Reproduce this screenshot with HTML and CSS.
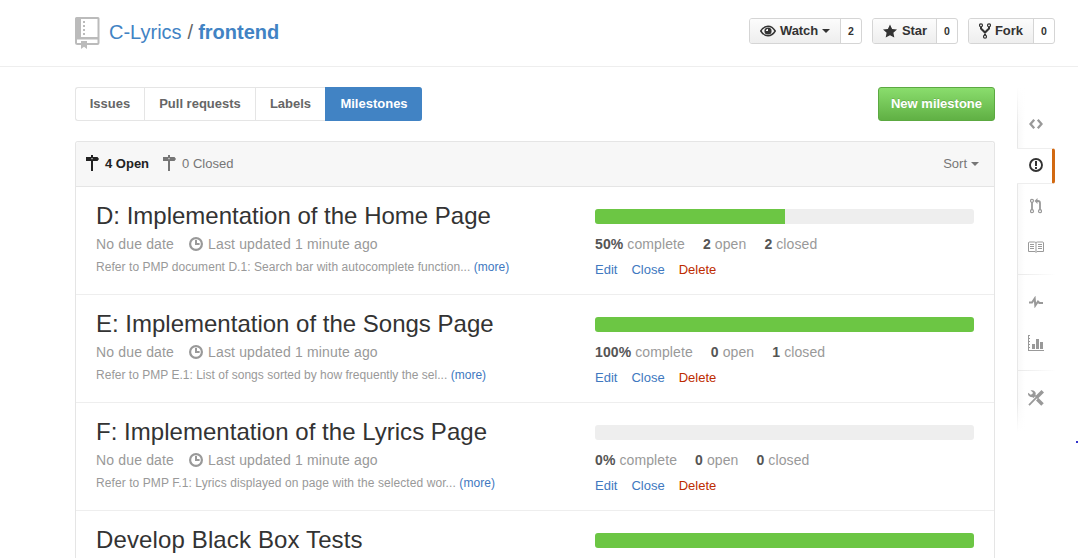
FILE: index.html
```html
<!DOCTYPE html>
<html lang="en">
<head>
<meta charset="utf-8">
<title>Milestones - C-Lyrics/frontend</title>
<link rel="stylesheet" href="styles.css">
</head>
<body>
<svg class="defs" width="0" height="0">
  <symbol id="clock" viewBox="0 0 14 14"><circle cx="7" cy="7" r="5.900" fill="none" stroke="currentColor" stroke-width="2.200"/><path d="M7 3v4h3.600" fill="none" stroke="currentColor" stroke-width="2"/></symbol>
  <symbol id="sign" viewBox="0 0 13 16"><path fill-rule="evenodd" d="M5 0h2v2h4.500L13 4l-1.500 2H7v10H5V6H0V2h5zM5.500 3v1.200h1V3z" fill="currentColor"/></symbol>
</svg>
<header class="pagehead">
  <h1 class="repo">
    <svg class="repo-icon" width="25" height="33" viewBox="0 0 25 33"><path fill="#bbb" fill-rule="evenodd" d="M1.500 0h21.500q1.500 0 1.500 1.500v24.500q0 2-2 2H12v4l-3-2.300L6 32v-4H2.500q-2.500 0-2.500-2.500V1.500Q0 0 1.500 0zM6 2v18h16.500V2zM2 22.500v3.500h4v-2h6v2h10.500v-3.500z"/><path fill="#bbb" d="M8 4h2v2H8zM8 8h2v2H8zM8 12h2v2H8zM8 16h2v2H8z"/></svg>
    <a class="owner">C-Lyrics</a><span class="slash">/</span><a class="name">frontend</a>
  </h1>
  <div class="actions">
    <div class="social watch"><span class="btn"><svg width="16" height="14" viewBox="0 0 16 14"><path d="M.8 7Q3.700 2.200 8 2.200T15.200 7Q12.300 11.800 8 11.800T.8 7z" fill="none" stroke="currentColor" stroke-width="1.500"/><circle cx="8" cy="7" r="3.600" fill="currentColor"/><path d="M8 4.800v2.200H5.800Q6 5 8 4.800z" fill="#fff"/></svg><b>Watch</b><i class="caret"></i></span><span class="count">2</span></div>
    <div class="social star"><span class="btn"><svg width="14" height="14" viewBox="0 0 14 14"><path d="M14 5.500l-4.900-.6L7 .5 4.900 4.900 0 5.500l3.600 3.300L2.700 13.500 7 11.200l4.300 2.300-.9-4.700z" fill="currentColor"/></svg><b>Star</b></span><span class="count">0</span></div>
    <div class="social fork"><span class="btn"><svg width="12" height="16" viewBox="0 0 12 16"><g fill="none" stroke="currentColor"><path d="M2 4v1.500l4 4 4-4V4M6 9v3" stroke-width="2"/><circle cx="2" cy="2.300" r="1.500" stroke-width="1.200"/><circle cx="10" cy="2.300" r="1.500" stroke-width="1.200"/><circle cx="6" cy="13.700" r="1.500" stroke-width="1.200"/></g></svg><b>Fork</b></span><span class="count">0</span></div>
  </div>
</header>
<div class="layout">
  <main>
    <div class="toolbar">
      <nav class="tabs"><a class="t-issues">Issues</a><a class="t-pulls">Pull requests</a><a class="t-labels">Labels</a><a class="t-miles selected">Milestones</a></nav>
      <button class="primary">New milestone</button>
    </div>
    <section class="table">
      <div class="table-head">
        <span class="state open"><svg width="13" height="16"><use href="#sign"/></svg>4 Open</span>
        <span class="state closed"><svg width="13" height="16"><use href="#sign"/></svg>0 Closed</span>
        <span class="sort">Sort<i class="caret"></i></span>
      </div>
      <article class="row">
        <div class="info">
          <h2>D: Implementation of the Home Page</h2>
          <p class="meta"><span class="due">No due date</span><svg width="14" height="14"><use href="#clock"/></svg><span class="updated">Last updated 1 minute ago</span></p>
          <p class="desc">Refer to PMP document D.1: Search bar with autocomplete function... <a>(more)</a></p>
        </div>
        <div class="progress">
          <div class="bar"><div class="fill" style="width:190px"></div></div>
          <p class="stats"><span><b>50%</b> complete</span><span><b>2</b> open</span><span><b>2</b> closed</span></p>
          <p class="links"><a>Edit</a><a>Close</a><a class="delete">Delete</a></p>
        </div>
      </article>
      <article class="row">
        <div class="info">
          <h2>E: Implementation of the Songs Page</h2>
          <p class="meta"><span class="due">No due date</span><svg width="14" height="14"><use href="#clock"/></svg><span class="updated">Last updated 1 minute ago</span></p>
          <p class="desc desc-e">Refer to PMP E.1: List of songs sorted by how frequently the sel... <a>(more)</a></p>
        </div>
        <div class="progress">
          <div class="bar"><div class="fill" style="width:100%"></div></div>
          <p class="stats"><span><b>100%</b> complete</span><span><b>0</b> open</span><span><b>1</b> closed</span></p>
          <p class="links"><a>Edit</a><a>Close</a><a class="delete">Delete</a></p>
        </div>
      </article>
      <article class="row">
        <div class="info">
          <h2 class="title-f">F: Implementation of the Lyrics Page</h2>
          <p class="meta"><span class="due">No due date</span><svg width="14" height="14"><use href="#clock"/></svg><span class="updated">Last updated 1 minute ago</span></p>
          <p class="desc desc-f">Refer to PMP F.1: Lyrics displayed on page with the selected wor... <a>(more)</a></p>
        </div>
        <div class="progress">
          <div class="bar"></div>
          <p class="stats"><span><b>0%</b> complete</span><span><b>0</b> open</span><span><b>0</b> closed</span></p>
          <p class="links"><a>Edit</a><a>Close</a><a class="delete">Delete</a></p>
        </div>
      </article>
      <article class="row last">
        <div class="info"><h2 class="title-t">Develop Black Box Tests</h2></div>
        <div class="progress"><div class="bar"><div class="fill" style="width:100%"></div></div></div>
      </article>
    </section>
  </main>
  <aside class="side">
    <a class="item code"><svg width="14" height="10" viewBox="0 0 14 10"><path d="M5.200.8L1.500 5l3.700 4.200M8.800.8L12.500 5 8.800 9.200" fill="none" stroke="currentColor" stroke-width="2.300"/></svg></a>
    <a class="item active"><svg width="14" height="14" viewBox="0 0 14 14"><circle cx="7" cy="7" r="6" fill="none" stroke="currentColor" stroke-width="1.900"/><path d="M6 3h2v5H6zM6 9h2v2H6z" fill="currentColor"/></svg></a>
    <a class="item pulls"><svg width="12" height="16" viewBox="0 0 12 16"><g fill="none" stroke="currentColor"><path d="M2 4v8" stroke-width="1.800"/><path d="M6 3h2q2 0 2 2v7" stroke-width="1.800"/><circle cx="2" cy="2.800" r="1.500" stroke-width="1.200"/><circle cx="2" cy="13.200" r="1.500" stroke-width="1.200"/><circle cx="10" cy="13.200" r="1.500" stroke-width="1.200"/></g><path d="M7.500 0v6l-3-3z" fill="currentColor"/></svg></a>
    <a class="item wiki"><svg width="16" height="12" viewBox="0 0 16 12"><g fill="none" stroke="currentColor"><path d="M.5 1.500Q1 1 2 1h4.500Q8 1 8 2q0-1 1.500-1H14q1 0 1.500.5v9H9L8 11.500 7 10.500H.5zM8 2v9"/><path d="M2 3.500h4M2 5.500h4M2 7.500h4M10 3.500h4M10 5.500h4M10 7.500h4"/></g></svg></a>
    <hr>
    <a class="item pulse"><svg width="14" height="12" viewBox="0 0 14 12"><path d="M0 6.500h3L5.700 2.500l.6 7 2.700-4 1.500 1.500H14" fill="none" stroke="currentColor" stroke-width="2"/></svg></a>
    <a class="item graphs"><svg width="16" height="16" viewBox="0 0 16 16"><path d="M0 0h2v1H1v2h1v1H1v2h1v1H1v2h1v1H1v2h1v1H1v2h15v1H0zM4 9h3v5H4zM8 4h3v10H8zM12 7h3v7h-3z" fill="currentColor"/></svg></a>
    <hr>
    <a class="item tools"><svg width="16" height="16" viewBox="0 0 16 16"><path d="M4.500 4.500l10 10" fill="none" stroke="currentColor" stroke-width="3.500"/><path d="M2.500.5Q5-.2 6.800 1.600T7 5.500L5.500 7.300Q2.500 7.500 1 6T.3 2.800L2.600 4.700 4.500 4 4.800 2.200z" fill="currentColor"/><path d="M9 7L1 15.300" stroke="#fff" stroke-width="3.500"/><path d="M13.500 0L16 2.500 9.500 9 7 6.500z" fill="currentColor"/><path d="M8.800 7.200L1 15.200" stroke="currentColor" stroke-width="1.800"/></svg></a>
  </aside>
</div>
<span class="edge-mark"></span>
</body>
</html>
```
FILE: styles.css
```css
* { box-sizing: border-box; }
body { margin: 0; background: #fff; color: #333; font: 13px/18px "Liberation Sans", Arial, sans-serif; position: relative; }
h1, h2, p { margin: 0; font-weight: normal; white-space: nowrap; }
svg { display: block; flex: none; }
a { color: #4078c0; }
.defs { position: absolute; }
.pagehead { height: 67px; border-bottom: 1px solid #eee; padding: 17px 23px 0 75px; display: flex; justify-content: space-between; }
.repo { display: flex; font-size: 20px; line-height: 30px; }
.repo-icon { margin-right: 9px; }
.repo a { color: #4183c4; }
.repo .name { font-weight: bold; }
.slash { margin: 0 5px 0 6px; color: #666; }
.actions { display: flex; gap: 10px; padding-top: 1px; }
.social { display: flex; height: 26px; border: 1px solid #d5d5d5; border-radius: 3px; overflow: hidden; }
.watch { width: 113px; }
.star { width: 86px; }
.fork { width: 87px; }
.btn { flex: 1; display: flex; align-items: center; padding-left: 10px; background: linear-gradient(#fcfcfc, #eee); border-right: 1px solid #d5d5d5; }
.btn b { font-size: 13px; margin-left: 4px; letter-spacing: -.1px; }
.star .btn b { margin-left: 5px; }
.count { width: 20px; text-align: center; font-size: 10.5px; font-weight: bold; line-height: 25px; }
.caret { display: inline-block; border: 4px solid transparent; border-top-color: currentColor; border-bottom: 0; margin-left: 4px; vertical-align: 2px; }
.layout { display: grid; grid-template-columns: 920px 39px; column-gap: 22px; padding: 20px 0 0 75px; }
.toolbar { display: flex; justify-content: space-between; height: 34px; margin-bottom: 20px; }
.tabs { display: flex; font-weight: bold; line-height: 32px; text-align: center; }
.tabs a { border: 1px solid #e5e5e5; border-right: 0; color: #666; white-space: nowrap; }
.t-issues { width: 69px; border-radius: 3px 0 0 3px; }
.t-pulls { width: 111px; }
.t-labels { width: 70px; }
.tabs .selected { width: 97px; background: #4183c4; border-color: #4183c4; color: #fff; border-radius: 0 3px 3px 0; }
.primary { width: 117px; padding: 0; border: 1px solid #5ca941; border-radius: 3px; background: linear-gradient(#8add6d, #60b044); color: #fff; font: bold 13px/30px "Liberation Sans", Arial, sans-serif; text-shadow: 0 -1px 0 rgba(0,0,0,.15); white-space: nowrap; }
.table { border: 1px solid #e5e5e5; border-bottom: 0; border-radius: 3px 3px 0 0; }
.table-head { height: 45px; display: flex; align-items: center; background: #f7f7f7; border-bottom: 1px solid #e5e5e5; padding: 0 15px 0 10px; border-radius: 3px 3px 0 0; }
.state { display: flex; gap: 6px; color: #767676; margin-right: 14px; }
.open { color: #222; font-weight: bold; }
.sort { margin-left: auto; color: #767676; }
.row { height: 108px; display: grid; grid-template-columns: 499px 379px; padding: 14px 20px 0; border-bottom: 1px solid #eee; }
.last { height: 47px; border-bottom: 0; }
.row h2 { font-size: 24px; line-height: 30px; }
.row .title-f { letter-spacing: .03px; }
.row .title-t { letter-spacing: .13px; }
.meta { display: flex; align-items: center; height: 20px; margin-top: 3px; font-size: 14px; letter-spacing: .16px; color: #999; }
.due { width: 93px; }
.updated { margin-left: 5px; }
.desc { margin-top: 5px; font-size: 12px; line-height: 17px; letter-spacing: .055px; color: #999; }
.desc-e { letter-spacing: .02px; }
.desc-f { letter-spacing: .085px; }
.progress { padding-top: 8px; }
.bar { height: 15px; border-radius: 3px; background: #eee; overflow: hidden; }
.fill { height: 15px; background: #6cc644; }
.stats { display: flex; gap: 18px; margin-top: 10px; height: 20px; line-height: 20px; font-size: 14px; letter-spacing: .1px; color: #999; }
.stats b { color: #555; }
.links { display: flex; gap: 14px; margin-top: 7px; font-size: 13px; }
.links .delete { color: #bd2c00; }
.side { height: 345px; padding-top: 18px; background: linear-gradient(#fff, transparent 40px, transparent 315px, #fff), linear-gradient(90deg, #e8e8e8 1px, #f9f9f9 1px, #fff 8px); }
.item { display: flex; align-items: center; justify-content: center; height: 41px; padding-right: 1px; color: #999; }
.code { height: 38px; }
.active { width: 38px; height: 36px; margin: 5px 0 0; background: #fff; color: #333; border: solid #eee; border-width: 1px 0; border-right: 3px solid #d26911; border-radius: 0 3px 3px 0; padding: 0 0 2px 3px; }
.pulls { height: 44px; }
.wiki { height: 38px; }
.side hr { margin: 8px 0 6px; border: 0; height: 1px; background: linear-gradient(90deg, #e8e8e8, #fff); }
.side .graphs { height: 42px; }
.side .graphs + hr { margin-top: 6px; }
.side .tools { height: 42px; }
.edge-mark { position: absolute; left: 1076px; top: 441px; width: 2px; height: 2px; background: #33c; }
```
